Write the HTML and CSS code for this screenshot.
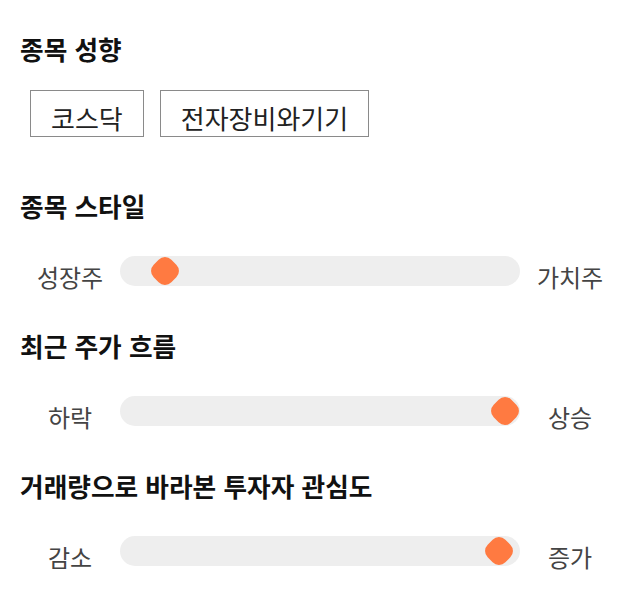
FILE: index.html
```html
<!DOCTYPE html>
<html lang="ko">
    <head>
        <meta charset="utf-8">
        <title>종목 분석</title>
        <link rel="stylesheet" href="styles.css">
    </head>
    <body>
      <div class="section first">
        <h2 class="title">종목 성향</h2>
        <div class="chips">
          <button class="chip">코스닥</button>
          <button class="chip">전자장비와기기</button>
        </div>
      </div>

      <div class="section">
        <h2 class="title">종목 스타일</h2>
        <div class="row">
          <span class="label">성장주</span>
          <div class="track"><span class="thumb" style="left: 11.25%"></span></div>
          <span class="label">가치주</span>
        </div>
      </div>

      <div class="section">
        <h2 class="title">최근 주가 흐름</h2>
        <div class="row">
          <span class="label">하락</span>
          <div class="track"><span class="thumb" style="left: 96.25%"></span></div>
          <span class="label">상승</span>
        </div>
      </div>

      <div class="section">
        <h2 class="title">거래량으로 바라본 투자자 관심도</h2>
        <div class="row">
          <span class="label">감소</span>
          <div class="track"><span class="thumb" style="left: 94.75%"></span></div>
          <span class="label">증가</span>
        </div>
      </div>
    </body>
</html>
```

FILE: styles.css
```css
body {
    margin: 0;
    padding: 33px 20px 0;
    font-family: "Noto Sans CJK KR", "Noto Sans", sans-serif;
    background-color: #ffffff;
    color: #111111;
}

.title {
    margin: 0;
    font-size: 25.7px;
    line-height: 32px;
    font-weight: bold;
    color: #111111;
}

.section.first {
    margin-bottom: 53px;
}

.chips {
    display: flex;
    gap: 16px;
    margin-top: 25px;
    margin-left: 10px;
}

.chip {
    height: 47px;
    padding: 8px 20px 0;
    border: 1px solid #8a8a8a;
    background-color: #ffffff;
    color: #222222;
    font-family: inherit;
    font-size: 26px;
    line-height: 37px;
    border-radius: 0;
}

.row {
    display: flex;
    align-items: flex-start;
    margin-top: 34px;
    margin-bottom: 38px;
}

.label {
    width: 100px;
    margin-top: 6px;
    text-align: center;
    font-size: 24px;
    line-height: 30px;
    color: #444444;
}

.track {
    position: relative;
    width: 400px;
    height: 30px;
    border-radius: 15px;
    background-color: #eeeeee;
}

.thumb {
    position: absolute;
    top: 50%;
    width: 25px;
    height: 25px;
    border-radius: 9px;
    background-color: #ff7a41;
    transform: translate(-50%, -50%) rotate(45deg);
}
```
